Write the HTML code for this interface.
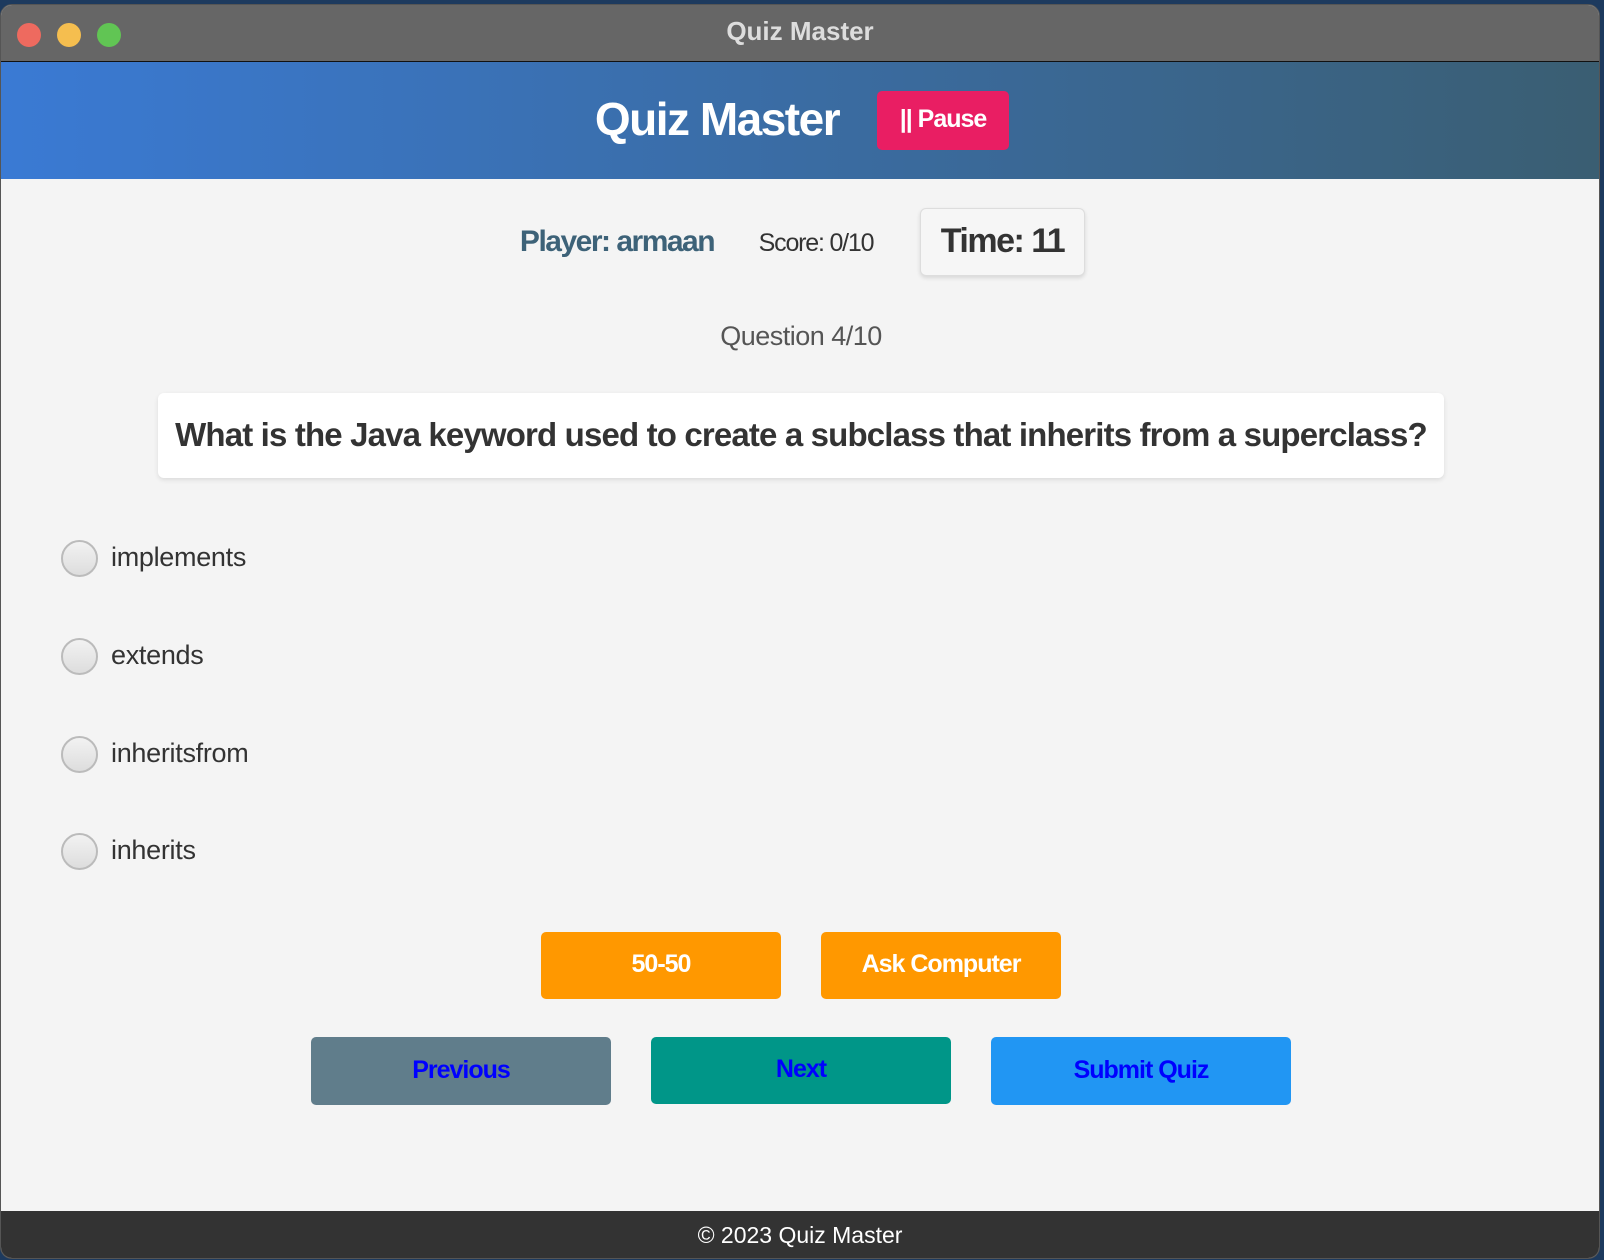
<!DOCTYPE html>
<html><head><meta charset="utf-8"><style>
*{margin:0;padding:0;box-sizing:border-box}
body{width:1604px;height:1260px;background:#1d3a5e;font-family:"Liberation Sans",sans-serif;position:relative;overflow:hidden}
.win{position:absolute;left:0;top:4px;width:1600px;height:1255px;border-radius:12px;overflow:hidden;background:#f4f4f4;border:1px solid #555}
.title{position:absolute;left:0;top:0;width:100%;height:57px;background:#666;border-bottom:1px solid #111;color:#ddd;font-weight:bold;font-size:26px;text-align:center;line-height:52px}
.dot{position:absolute;top:18px;width:24px;height:24px;border-radius:50%}
.hdr{position:absolute;left:0;top:57px;width:100%;height:117px;background:linear-gradient(90deg,#3a7ad4,#3a5e72)}
.abs{position:absolute;white-space:nowrap}
.c{transform:translateX(-50%)}
.btn{position:absolute;border-radius:5px;text-align:center;font-weight:bold;font-size:25px;letter-spacing:-1px}
.radio{position:absolute;left:60px;width:37px;height:37px;border-radius:50%;border:2px solid #bbb;background:linear-gradient(#f2f2f2,#ddd)}
.opt{position:absolute;left:110px;font-size:27px;color:#333;letter-spacing:-0.3px}
</style></head><body>
<div class="win">
<div class="title">Quiz Master</div>
<div class="dot" style="left:16px;background:#ee6a5f"></div>
<div class="dot" style="left:56px;background:#f5be4f"></div>
<div class="dot" style="left:96px;background:#61c554"></div>
<div class="hdr"></div>
<div class="abs c" style="left:716px;top:87px;font-size:46px;font-weight:bold;color:#fff;letter-spacing:-1.5px">Quiz Master</div>
<div class="btn" style="left:876px;top:86px;width:132px;height:59px;background:#e91e63;color:#fff;line-height:57px">|| Pause</div>
<div class="abs c" style="left:616px;top:220px;font-size:30px;font-weight:bold;color:#3d6278;letter-spacing:-1.5px">Player: armaan</div>
<div class="abs c" style="left:815px;top:224px;font-size:25px;color:#333;letter-spacing:-1.2px">Score: 0/10</div>
<div class="abs" style="left:919px;top:203px;width:165px;height:68px;background:#f6f6f6;border:1px solid #ddd;border-radius:6px;box-shadow:0 2px 4px rgba(0,0,0,.12);font-size:34px;font-weight:bold;color:#333;text-align:center;line-height:64px;letter-spacing:-1.5px">Time: 11</div>
<div class="abs c" style="left:800px;top:316px;font-size:27px;color:#555;letter-spacing:-0.5px">Question 4/10</div>
<div class="abs" style="left:157px;top:388px;width:1286px;height:85px;background:#fff;border-radius:6px;box-shadow:0 2px 5px rgba(0,0,0,.1);font-size:33px;font-weight:bold;color:#333;text-align:center;line-height:83px;letter-spacing:-0.85px">What is the Java keyword used to create a subclass that inherits from a superclass?</div>
<div class="radio" style="top:535px"></div><div class="opt" style="top:537px">implements</div>
<div class="radio" style="top:633px"></div><div class="opt" style="top:635px">extends</div>
<div class="radio" style="top:731px"></div><div class="opt" style="top:733px">inheritsfrom</div>
<div class="radio" style="top:828px"></div><div class="opt" style="top:830px">inherits</div>
<div class="btn" style="left:540px;top:927px;width:240px;height:67px;line-height:65px;background:#ff9800;color:#fff">50-50</div>
<div class="btn" style="left:820px;top:927px;width:240px;height:67px;line-height:65px;background:#ff9800;color:#fff">Ask Computer</div>
<div class="btn" style="left:310px;top:1032px;width:300px;height:68px;line-height:66px;background:#607d8b;color:#00f">Previous</div>
<div class="btn" style="left:650px;top:1032px;width:300px;height:67px;line-height:65px;background:#009688;color:#00f">Next</div>
<div class="btn" style="left:990px;top:1032px;width:300px;height:68px;line-height:66px;background:#2196f3;color:#00f">Submit Quiz</div>
<div class="abs" style="left:0;top:1206px;width:100%;height:50px;background:#333;color:#fff;font-size:23px;text-align:center;line-height:48px">© 2023 Quiz Master</div>
</div>
</body></html>
